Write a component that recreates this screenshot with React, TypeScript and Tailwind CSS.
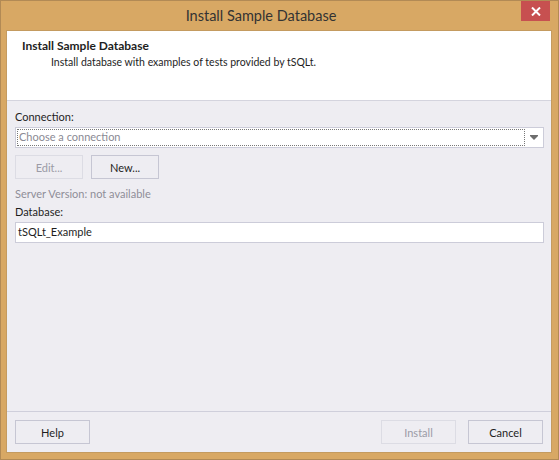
import React from 'react';

const font = { fontFamily: '"Segoe UI", Lato, "Noto Sans", sans-serif' };

const DialogButton: React.FC<{ label: string; disabled?: boolean; width: string }> = ({ label, disabled, width }) => (
  <button
    className={`${width} h-[24px] border text-[11px] leading-none ${
      disabled ? 'border-[#dcdce4] text-[#9b9ba6]' : 'border-[#c6c6d3] text-[#1e1e1e]'
    } bg-[#eeedf2]`}
  >
    {label}
  </button>
);

const App: React.FC = () => {
  return (
    <div className="w-[559px] h-[460px] bg-[#d8a864] border border-[#b28a55] flex flex-col" style={font}>
      {/* title bar */}
      <div className="h-[29px] flex items-start shrink-0">
        <div className="flex-1 h-full flex items-center justify-center">
          <span className="text-[14.5px] text-[#333]">Install Sample Database</span>
        </div>
        <div className="w-[29px] h-[20px] mr-[8px] bg-[#c75050] flex items-center justify-center">
          <svg width="10" height="9" viewBox="0 0 10 9">
            <path d="M1 0.5 L9 8.5 M9 0.5 L1 8.5" stroke="#fff" strokeWidth="2" />
          </svg>
        </div>
      </div>

      {/* client area */}
      <div className="flex-1 ml-[5px] mr-[6px] mb-[6px] border border-[#c49b60] bg-[#eeedf2] flex flex-col">
        <div className="h-[70px] bg-white border-b border-[#d4d4de] pl-[15px] pt-[7px] shrink-0">
          <div className="text-[12px] font-bold text-[#1e1e1e] leading-[16px]">Install Sample Database</div>
          <div className="text-[10.5px] text-[#1e1e1e] leading-[16px] pl-[29px]">
            Install database with examples of tests provided by tSQLt.
          </div>
        </div>

        <div className="flex-1 pl-[8px] pr-[7px] pt-[8px] flex flex-col">
          <div className="text-[11px] text-[#1e1e1e] leading-[16px]">Connection:</div>
          <div className="mt-[2px] h-[21px] bg-white border border-[#ccccd9] flex items-center pl-[1px]">
            <div className="flex-1 h-[17px] border border-dotted border-[#777] flex items-center pl-[1px] text-[11px] text-[#8a8a94]">
              Choose a connection
            </div>
            <div className="w-[18px] flex justify-center">
              <svg width="8" height="5" viewBox="0 0 8 5">
                <path d="M0 0 H8 V1 L4 5 L0 1 Z" fill="#6d6d6d" />
              </svg>
            </div>
          </div>

          <div className="mt-[7px] flex gap-[8px]">
            <DialogButton label="Edit..." disabled width="w-[68px]" />
            <DialogButton label="New..." width="w-[68px]" />
          </div>

          <div className="mt-[7px] text-[11px] text-[#8e8e98] leading-[16px]">Server Version: not available</div>
          <div className="mt-[2px] text-[11px] text-[#1e1e1e] leading-[16px]">Database:</div>
          <div className="mt-[2px] h-[21px] bg-white border border-[#ccccd9] flex items-center pl-[2px] text-[11px] text-[#1e1e1e]">
            tSQLt_Example
          </div>
        </div>

        <div className="h-[41px] border-t border-[#cfcfdb] flex items-start pt-[8px] pl-[8px] pr-[8px] shrink-0">
          <DialogButton label="Help" width="w-[75px]" />
          <div className="flex-1" />
          <DialogButton label="Install" disabled width="w-[75px]" />
          <div className="w-[12px]" />
          <DialogButton label="Cancel" width="w-[75px]" />
        </div>
      </div>
    </div>
  );
};

export default App;
